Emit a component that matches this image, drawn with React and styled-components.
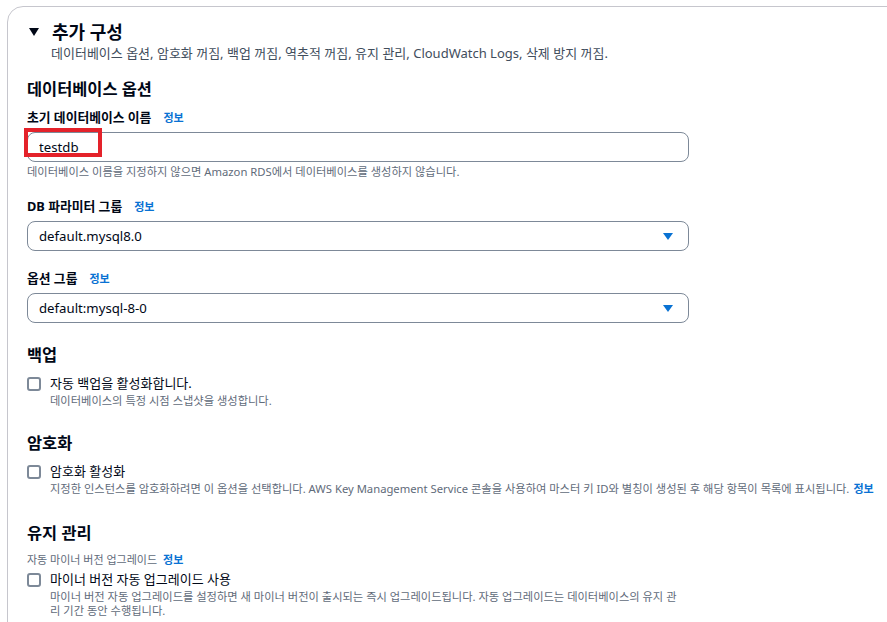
import * as React from 'react'
import styled, { createGlobalStyle } from 'styled-components'

const colors = {
  text: '#000716',
  hint: '#5f6b7a',
  link: '#0972d3',
  control: '#7d8998',
  card: '#c6c6cd',
  mark: '#e4222a',
}

const App = () => {
  return (
    <>
      <GlobalStyle />
      <Card>
        <Header>
          <Caret width='10' height='8' viewBox='0 0 10 8'>
            <polygon points='0,0 10,0 5,8' fill={colors.text} />
          </Caret>
          <Title>추가 구성</Title>
        </Header>
        <Subtitle>데이터베이스 옵션, 암호화 꺼짐, 백업 꺼짐, 역추적 꺼짐, 유지 관리, CloudWatch Logs, 삭제 방지 꺼짐.</Subtitle>

        <Heading top={17}>데이터베이스 옵션</Heading>

        <Label top={8}>초기 데이터베이스 이름<Info gap={12}>정보</Info></Label>
        <InputWrap>
          <Input readOnly value='testdb' />
          <Highlight />
        </InputWrap>
        <Hint>데이터베이스 이름을 지정하지 않으면 Amazon RDS에서 데이터베이스를 생성하지 않습니다.</Hint>

        <Label top={17}>DB 파라미터 그룹<Info gap={12}>정보</Info></Label>
        <Select>
          default.mysql8.0
          <DropIcon />
        </Select>

        <Label top={18}>옵션 그룹<Info gap={12}>정보</Info></Label>
        <Select>
          default:mysql-8-0
          <DropIcon />
        </Select>

        <Heading top={21}>백업</Heading>
        <CheckRow top={8}>
          <Box />
          <div>
            <CheckLabel>자동 백업을 활성화합니다.</CheckLabel>
            <CheckDesc>데이터베이스의 특정 시점 스냅샷을 생성합니다.</CheckDesc>
          </div>
        </CheckRow>

        <Heading top={24}>암호화</Heading>
        <CheckRow top={8}>
          <Box />
          <div>
            <CheckLabel>암호화 활성화</CheckLabel>
            <CheckDesc nowrap>
              지정한 인스턴스를 암호화하려면 이 옵션을 선택합니다. AWS Key Management Service 콘솔을 사용하여 마스터 키 ID와 별칭이 생성된 후 해당 항목이 목록에 표시됩니다.<Info gap={4}>정보</Info>
            </CheckDesc>
          </div>
        </CheckRow>

        <Heading top={26}>유지 관리</Heading>
        <SmallLabel>자동 마이너 버전 업그레이드<Info gap={6}>정보</Info></SmallLabel>
        <CheckRow top={2}>
          <Box />
          <div>
            <CheckLabel>마이너 버전 자동 업그레이드 사용</CheckLabel>
            <CheckDesc nowrap>
              마이너 버전 자동 업그레이드를 설정하면 새 마이너 버전이 출시되는 즉시 업그레이드됩니다. 자동 업그레이드는 데이터베이스의 유지 관<br />
              리 기간 동안 수행됩니다.
            </CheckDesc>
          </div>
        </CheckRow>
      </Card>
    </>
  )
}

const DropIcon = () => (
  <DropSvg width='10' height='7' viewBox='0 0 10 7'>
    <polygon points='0,0 10,0 5,7' fill={colors.link} />
  </DropSvg>
)

const GlobalStyle = createGlobalStyle`
  html, body {
    margin: 0;
    padding: 0;
    background: #ffffff;
    overflow: hidden;
  }
  body {
    font-family: "Noto Sans", "Noto Sans CJK KR", sans-serif;
    color: ${colors.text};
  }
`

const Card = styled.div`
  margin: 6px 0 0 7px;
  width: 900px;
  height: 640px;
  box-sizing: border-box;
  border: 1px solid ${colors.card};
  border-radius: 16px 0 0 0;
  padding: 14px 0 0 19px;
`

const Header = styled.div`
  display: flex;
  align-items: center;
  height: 22px;
`

const Caret = styled.svg`
  margin: 0 13px 0 2px;
  display: block;
`

const Title = styled.div`
  font-size: 18px;
  font-weight: 700;
  line-height: 22px;
`

const Subtitle = styled.div`
  margin: 2px 0 0 24px;
  font-size: 13px;
  line-height: 16px;
  color: #414d5c;
`

const Heading = styled.div`
  margin-top: ${({ top }) => top}px;
  font-size: 16.4px;
  font-weight: 700;
  line-height: 22px;
`

const Label = styled.div`
  margin-top: ${({ top }) => top}px;
  font-size: 12.8px;
  font-weight: 700;
  line-height: 18px;
`

const Info = styled.span`
  margin-left: ${({ gap }) => gap}px;
  color: ${colors.link};
  font-weight: 700;
  font-size: 11px;
`

const InputWrap = styled.div`
  position: relative;
  margin-top: 5px;
  width: 662px;
`

const Input = styled.input`
  display: block;
  box-sizing: border-box;
  width: 100%;
  height: 30px;
  border: 1px solid ${colors.control};
  border-radius: 8px;
  padding: 0 11px;
  font-family: inherit;
  font-size: 13.2px;
  color: ${colors.text};
  outline: none;
`

const Highlight = styled.div`
  position: absolute;
  left: -3px;
  top: -4px;
  width: 78px;
  height: 29px;
  box-sizing: border-box;
  border: 4px solid ${colors.mark};
`

const Hint = styled.div`
  margin-top: 2px;
  font-size: 11.25px;
  line-height: 16px;
  color: ${colors.hint};
`

const Select = styled.div`
  margin-top: 5px;
  width: 662px;
  height: 30px;
  box-sizing: border-box;
  border: 1px solid ${colors.control};
  border-radius: 8px;
  padding: 0 15px 0 11px;
  display: flex;
  align-items: center;
  justify-content: space-between;
  font-size: 13.2px;
`

const DropSvg = styled.svg`
  display: block;
`

const CheckRow = styled.div`
  margin-top: ${({ top }) => top}px;
  display: flex;
  align-items: flex-start;
  gap: 9px;
`

const Box = styled.div`
  flex: none;
  margin-top: 3px;
  width: 14px;
  height: 14px;
  box-sizing: border-box;
  border: 2px solid ${colors.control};
  border-radius: 3px;
`

const CheckLabel = styled.div`
  font-size: 13px;
  line-height: 18px;
`

const CheckDesc = styled.div`
  font-size: 11.25px;
  line-height: 14px;
  margin-top: 2px;
  color: ${colors.hint};
  white-space: ${({ nowrap }) => (nowrap ? 'nowrap' : 'normal')};
`

const SmallLabel = styled.div`
  margin-top: 8px;
  font-size: 11px;
  line-height: 16px;
  color: ${colors.hint};
`

export default App
